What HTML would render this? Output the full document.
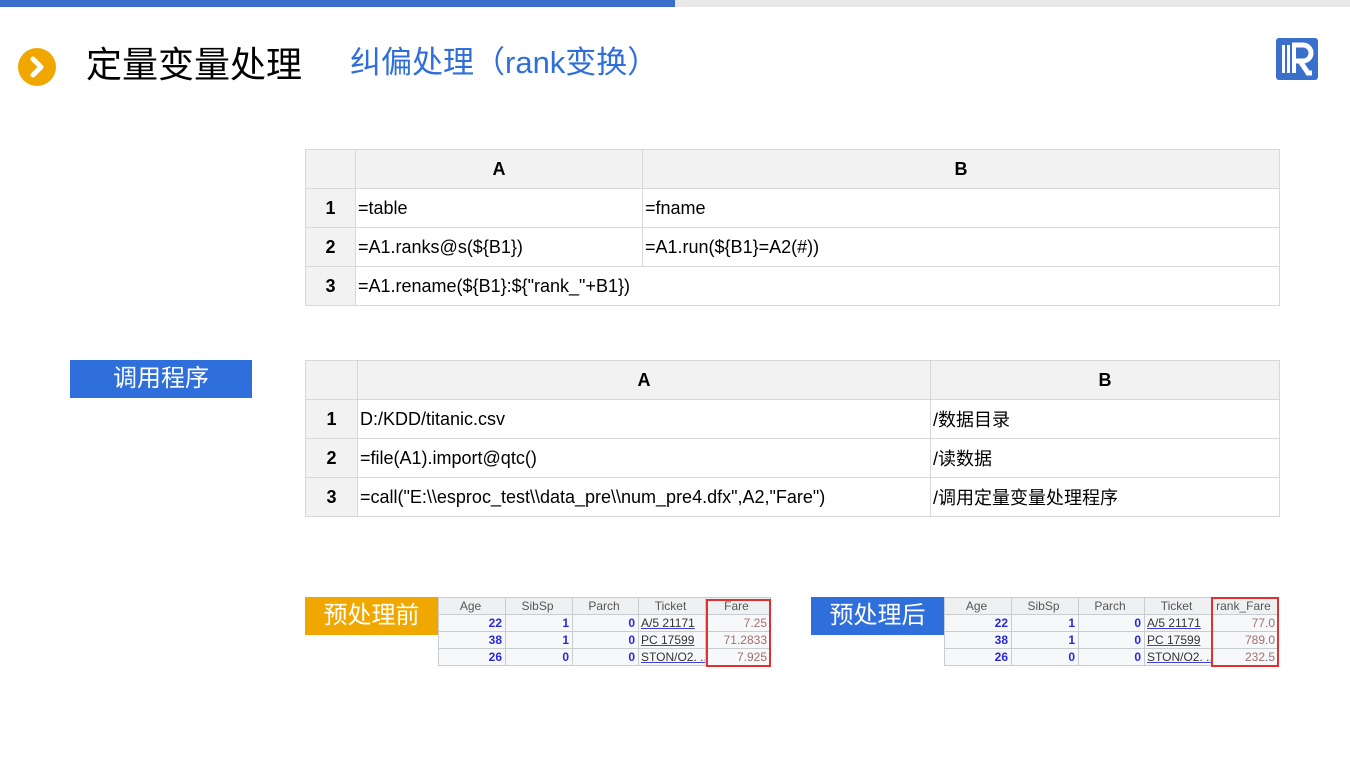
<!DOCTYPE html>
<html><head><meta charset="utf-8"><style>
*{margin:0;padding:0;box-sizing:border-box}
body{width:1350px;height:759px;background:#fff;position:relative;overflow:hidden;font-family:"Liberation Sans","Noto Sans CJK SC",sans-serif}
.abs{position:absolute}
table{border-collapse:collapse;position:absolute;table-layout:fixed}
.t td{border:1px solid #d8d8d8;height:39px;font-size:18px;color:#000;padding-left:2px;white-space:nowrap}
.t tr:first-child td{background:#f2f2f2;font-weight:bold;text-align:center;padding:0}
.t td.n{background:#f2f2f2;font-weight:bold;text-align:center;padding:0}
.s td{border:1px solid #c8cdd2;height:17px;font-size:12px;color:#2828e0;text-align:right;padding-right:3px;white-space:nowrap;overflow:hidden;font-weight:bold}
.s tr:first-child td{background:#eef0f2;color:#555;text-align:center;font-weight:normal}
.s tr td{background:#f7f8f9}
.s td.tk{color:#333;text-align:left;padding-left:2px;font-weight:normal;text-decoration:underline;text-decoration-color:#4040e0}
.s td.f{color:#a07070;font-weight:normal}
.lab{position:absolute;color:#fff;font-size:24px;text-align:center;line-height:38px}
.red{position:absolute;border:2px solid #e03030}
</style></head><body>
<div class="abs" style="left:0;top:0;width:675px;height:7px;background:#3a6fcc"></div>
<div class="abs" style="left:675px;top:0;width:675px;height:7px;background:#e8e8e8"></div>
<svg class="abs" style="left:18px;top:48px" width="38" height="38" viewBox="0 0 38 38"><circle cx="19" cy="19" r="19" fill="#f0a800"/><path d="M15 11 L23 19 L15 27" stroke="#fff" stroke-width="5" fill="none" stroke-linecap="round" stroke-linejoin="round"/></svg>
<div class="abs" style="left:86px;top:40px;font-size:36px;color:#000;line-height:50px">定量变量处理</div>
<div class="abs" style="left:350px;top:40px;font-size:31px;color:#2f6fdb;line-height:46px">纠偏处理（rank变换）</div>
<svg class="abs" style="left:1276px;top:38px" width="42" height="42" viewBox="0 0 42 42"><rect width="42" height="42" rx="3" fill="#3a6fcc"/><rect x="6" y="7" width="3" height="28" fill="#fff"/><rect x="11" y="7" width="3" height="28" fill="#fff"/><path d="M16 7 H27 A8 8 0 0 1 27 23 H20 M24 23 L32 35 H36" stroke="#fff" stroke-width="5" fill="none"/><rect x="16" y="7" width="4" height="28" fill="#fff"/></svg>

<table class="t" style="left:305px;top:149px;width:975px">
<colgroup><col style="width:50px"><col style="width:287px"><col></colgroup>
<tr><td></td><td>A</td><td>B</td></tr>
<tr><td class="n">1</td><td>=table</td><td>=fname</td></tr>
<tr><td class="n">2</td><td>=A1.ranks@s(${B1})</td><td>=A1.run(${B1}=A2(#))</td></tr>
<tr><td class="n">3</td><td colspan="2">=A1.rename(${B1}:${"rank_"+B1})</td></tr>
</table>

<div class="lab" style="left:70px;top:360px;width:182px;background:#2f6fdb">调用程序</div>

<table class="t" style="left:305px;top:360px;width:975px">
<colgroup><col style="width:52px"><col style="width:573px"><col></colgroup>
<tr><td></td><td>A</td><td>B</td></tr>
<tr><td class="n">1</td><td>D:/KDD/titanic.csv</td><td>/数据目录</td></tr>
<tr><td class="n">2</td><td>=file(A1).import@qtc()</td><td>/读数据</td></tr>
<tr><td class="n">3</td><td>=call("E:\\esproc_test\\data_pre\\num_pre4.dfx",A2,"Fare")</td><td>/调用定量变量处理程序</td></tr>
</table>

<div class="lab" style="left:305px;top:597px;width:133px;background:#f0a800">预处理前</div>
<table class="s" style="left:438px;top:597px;width:333px">
<colgroup><col style="width:67px"><col style="width:67px"><col style="width:66px"><col style="width:67px"><col></colgroup>
<tr><td>Age</td><td>SibSp</td><td>Parch</td><td>Ticket</td><td>Fare</td></tr>
<tr><td>22</td><td>1</td><td>0</td><td class="tk">A/5 21171</td><td class="f">7.25</td></tr>
<tr><td>38</td><td>1</td><td>0</td><td class="tk">PC 17599</td><td class="f">71.2833</td></tr>
<tr><td>26</td><td>0</td><td>0</td><td class="tk">STON/O2. ...</td><td class="f">7.925</td></tr>
</table>
<div class="red" style="left:706px;top:599px;width:65px;height:68px"></div>

<div class="lab" style="left:811px;top:597px;width:133px;background:#2f6fdb">预处理后</div>
<table class="s" style="left:944px;top:597px;width:335px">
<colgroup><col style="width:67px"><col style="width:67px"><col style="width:66px"><col style="width:67px"><col></colgroup>
<tr><td>Age</td><td>SibSp</td><td>Parch</td><td>Ticket</td><td>rank_Fare</td></tr>
<tr><td>22</td><td>1</td><td>0</td><td class="tk">A/5 21171</td><td class="f">77.0</td></tr>
<tr><td>38</td><td>1</td><td>0</td><td class="tk">PC 17599</td><td class="f">789.0</td></tr>
<tr><td>26</td><td>0</td><td>0</td><td class="tk">STON/O2. ...</td><td class="f">232.5</td></tr>
</table>
<div class="red" style="left:1211px;top:597px;width:68px;height:70px"></div>
</body></html>
